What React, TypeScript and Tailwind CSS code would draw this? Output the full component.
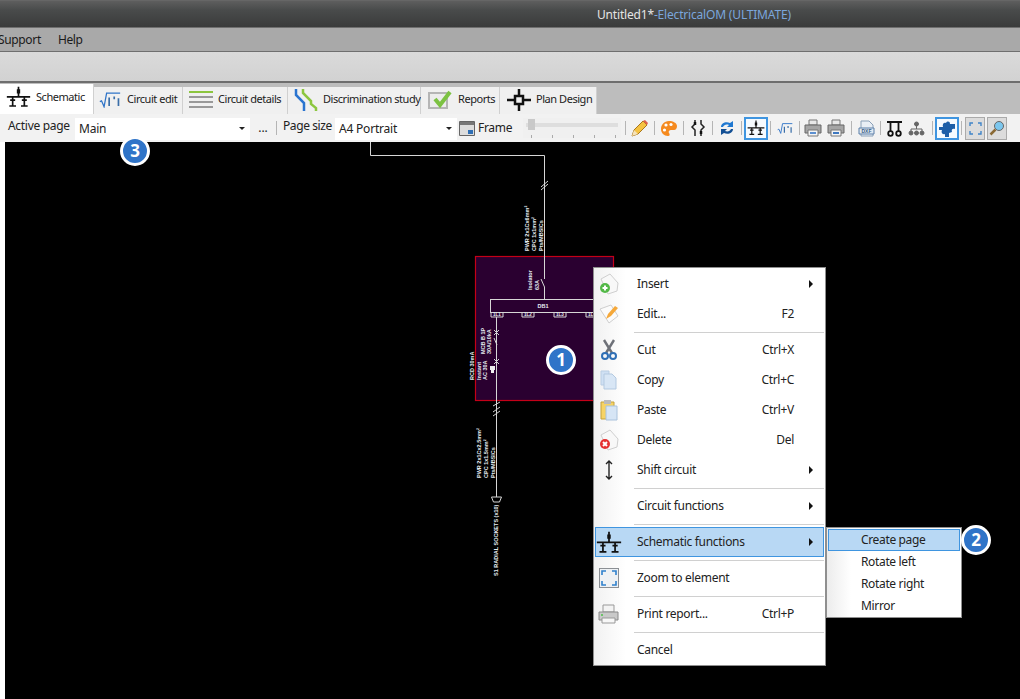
import type { ReactNode } from "react";

const SANS = "font-['Open_Sans','Noto_Sans',sans-serif]";

function SchematicIcon({ size = 30 }: { size?: number }) {
  return (
    <svg width={size} height={(size * 26) / 30} viewBox="0 0 30 26" stroke="#111" fill="#111">
      <path d="M15 1v12M1 13h28M8 13v11M22 13v11" strokeWidth="2" fill="none" />
      <path d="M13 4h4v5h-4zM5 16h6v2H5zM19 16h6v2h-6zM4 23h8v2H4zM18 23h8v2h-8z" stroke="none" />
    </svg>
  );
}

function SqrtIcon({ w = 26, h = 18 }: { w?: number; h?: number }) {
  return (
    <svg width={w} height={h} viewBox="0 0 26 18" fill="none" stroke="#2f74c8">
      <path d="M1 11l2-1 3 7 3-16h16" strokeWidth="1.5" />
      <path d="M12 6v10M18 5v3M23 7v9" strokeWidth="2" stroke="#3a6ea8" />
    </svg>
  );
}

function PrinterIcon({ accent = "#5b8fd0" }: { accent?: string }) {
  return (
    <svg width="18" height="18" viewBox="0 0 18 18">
      <path d="M5 1h8v5H5z" fill="#e8e8e8" stroke="#777" />
      <path d="M1 6h16v8H1z" fill="#a5a5a5" stroke="#666" />
      <path d="M4 11h10v6H4z" fill="#f4f4f4" stroke="#777" />
      <path d="M6 13h6v2H6z" fill={accent} />
    </svg>
  );
}

function Sep() {
  return <div className="w-px h-[14px] bg-[#b5b5b5] shrink-0" />;
}

function Tab({ w, active, icon, label }: { w: string; active?: boolean; icon: ReactNode; label: string }) {
  return (
    <div
      className={`${w} flex items-center shrink-0 border-r border-[#d0d0d0] ${active ? "bg-white pb-1" : "bg-[#f0f0f0] mt-[3px] pb-[2px]"}`}
    >
      {icon}
      <span className="font-['Liberation_Sans',sans-serif] text-[11px] tracking-[-0.45px] text-[#222] whitespace-nowrap">{label}</span>
    </div>
  );
}

function Combo({ w, label }: { w: string; label: string }) {
  return (
    <div className={`${w} h-[22px] mt-[1px] bg-white flex items-center shrink-0 pl-[4px] pr-[5px] justify-between`}>
      <span className="text-[12px] tracking-[-0.2px] text-[#222] mt-[1px]">{label}</span>
      <span className="w-0 h-0 border-x-[3px] border-x-transparent border-t-[3px] border-t-[#222]" />
    </div>
  );
}

function ToolSlot({ w = "w-[28px]", boxed, framed, children }: { w?: string; boxed?: boolean; framed?: boolean; children: ReactNode }) {
  return (
    <div
      className={`${w} h-[23px] shrink-0 flex items-center justify-center ${boxed ? "border-2 border-[#3f95e0] bg-[#f6fbff]" : ""} ${framed ? "border border-[#aaa] bg-[#dcdcdc]" : ""}`}
    >
      {children}
    </div>
  );
}

function Toolbar() {
  return (
    <div className={`${SANS} h-[28px] bg-[#f2f2f2] flex items-center pl-[8px] shrink-0`}>
      <span className="w-[67px] text-[12px] tracking-[-0.3px] text-[#222] shrink-0 whitespace-nowrap -mt-1">Active page</span>
      <Combo w="w-[175px]" label="Main" />
      <span className="w-[26px] text-center text-[12px] text-[#222] shrink-0">...</span>
      <Sep />
      <span className="w-[58px] pl-[6px] text-[12px] tracking-[-0.4px] text-[#222] shrink-0 whitespace-nowrap -mt-1">Page size</span>
      <Combo w="w-[122px]" label="A4 Portrait" />
      <svg width="16" height="15" viewBox="0 0 16 15" className="ml-[2px] shrink-0">
        <path d="M.5.5h15v14H.5z" fill="#ddd" stroke="#666" />
        <path d="M1 1h14v3H1z" fill="#777" />
        <path d="M9 9h5v4H9z" fill="#2f6fb5" />
      </svg>
      <span className="w-[48px] pl-[3px] text-[12px] tracking-[-0.3px] text-[#222] shrink-0">Frame</span>
      <div className="w-[98px] h-[20px] shrink-0 relative bg-[#f0f0f0]">
        <div className="absolute left-[3px] right-[3px] top-[5px] h-[4px] bg-[#dedede]" />
        <div className="absolute left-[5px] top-[1px] w-[7px] h-[11px] bg-[#c9c9c9]" />
        <div className="absolute left-[8px] right-[5px] bottom-0 h-[3px] flex justify-between">
          <i className="w-px h-full bg-[#aaa]" />
          <i className="w-px h-full bg-[#aaa]" />
          <i className="w-px h-full bg-[#aaa]" />
          <i className="w-px h-full bg-[#aaa]" />
          <i className="w-px h-full bg-[#aaa]" />
        </div>
      </div>
      <div className="ml-[4px]"><Sep /></div>
      <ToolSlot>
        <svg width="18" height="18" viewBox="0 0 18 18">
          <path d="M1 17l2-6L12 2l4 4-9 9z" fill="#f5c242" stroke="#a8761c" />
          <path d="M12 2l2-1 3 3-1 2z" fill="#e0604c" />
          <path d="M1 17l2-6 4 4z" fill="#f5e2b8" />
        </svg>
      </ToolSlot>
      <Sep />
      <ToolSlot>
        <svg width="18" height="17" viewBox="0 0 18 17">
          <path d="M9 1C4 1 1 5 1 9s3 7 7 7c2 0 2-2 1-3s0-3 2-3h3c2 0 3-2 3-4 0-3-4-5-8-5z" fill="#f58a1f" />
          <circle cx="6" cy="5" r="1.6" fill="#fff" />
          <circle cx="11" cy="4.5" r="1.6" fill="#fff" />
          <circle cx="4.5" cy="10" r="1.6" fill="#fff" />
        </svg>
      </ToolSlot>
      <Sep />
      <ToolSlot>
        <svg width="16" height="18" viewBox="0 0 16 18" fill="none" stroke="#222" strokeWidth="1.5">
          <path d="M5 1v4L2 8l3 3v6M11 1v4l3 3-3 3v6" />
          <path d="M5 3v3M11 12v3" stroke="#111" strokeWidth="2.5" />
        </svg>
      </ToolSlot>
      <Sep />
      <ToolSlot>
        <svg width="16" height="16" viewBox="0 0 16 16" fill="#1f78d1">
          <path d="M2 7c0-4 5-6 9-4l3-2v6H8l2-2C7 4 5 5 4 7z" />
          <path d="M14 9c0 4-5 6-9 4l-3 2V9h6l-2 2c3 1 5 0 6-2z" fill="#124f94" />
        </svg>
      </ToolSlot>
      <Sep />
      <div className="w-[28px] flex justify-center shrink-0">
        <ToolSlot w="w-[24px]" boxed><SchematicIcon size={18} /></ToolSlot>
      </div>
      <Sep />
      <ToolSlot><SqrtIcon w={16} h={11} /></ToolSlot>
      <Sep />
      <ToolSlot w="w-[26px]"><PrinterIcon /></ToolSlot>
      <ToolSlot w="w-[20px]"><PrinterIcon accent="#3f78c0" /></ToolSlot>
      <div className="ml-[5px]"><Sep /></div>
      <ToolSlot>
        <svg width="17" height="17" viewBox="0 0 17 17">
          <path d="M3 1h8l4 4v11H3z" fill="#e8eef5" stroke="#8aa0b8" />
          <path d="M1 8h15v6H1z" fill="#dfe8f2" stroke="#5a7fa8" />
          <text x="8.5" y="13" textAnchor="middle" fontFamily="'Liberation Sans',sans-serif" fontSize="5" fontWeight="700" fill="#3d5f85">DXF</text>
        </svg>
      </ToolSlot>
      <Sep />
      <ToolSlot w="w-[26px]">
        <svg width="17" height="17" viewBox="0 0 17 17" fill="none" stroke="#111" strokeWidth="1.8">
          <path d="M1 2h15M4.500 2v9M12.500 2v9" />
          <circle cx="4.500" cy="13.500" r="2.300" />
          <circle cx="12.500" cy="13.500" r="2.300" />
        </svg>
      </ToolSlot>
      <ToolSlot w="w-[18px]">
        <svg width="17" height="15" viewBox="0 0 17 15" fill="#666" stroke="#666">
          <path d="M8.500 4v4M3 12V8h11v4" fill="none" />
          <circle cx="8.500" cy="3" r="2" />
          <circle cx="3" cy="12" r="2" />
          <circle cx="8.500" cy="12" r="2" />
          <circle cx="14" cy="12" r="2" />
        </svg>
      </ToolSlot>
      <div className="ml-[7px]"><Sep /></div>
      <div className="w-[28px] flex justify-center shrink-0">
        <ToolSlot w="w-[24px]" boxed>
          <svg width="18" height="17" viewBox="0 0 18 17" fill="#1d5fa8">
            <path d="M1 7h4c-1-3 1-5 3-4 1-2 4-2 4 1h5v5c-2-1-4 0-3 3l-3 1v4H7v-3c-3 1-4-2-3-4H1z" />
          </svg>
        </ToolSlot>
      </div>
      <Sep />
      <div className="ml-[3px] flex gap-[2px]">
        <ToolSlot w="w-[20px]" framed>
          <svg width="13" height="13" viewBox="0 0 13 13" fill="none" stroke="#3f84c8" strokeWidth="1.4">
            <path d="M1 4V1h3M9 1h3v3M12 9v3H9M4 12H1V9" />
          </svg>
        </ToolSlot>
        <ToolSlot w="w-[20px]" framed>
          <svg width="16" height="16" viewBox="0 0 16 16">
            <circle cx="10" cy="6" r="4.500" fill="#7cc7ee" stroke="#666" />
            <path d="M6.500 9.500L1.500 14.500" stroke="#8a6a35" strokeWidth="2.500" />
          </svg>
        </ToolSlot>
      </div>
    </div>
  );
}

function Vtext({ x, y, children }: { x: number; y: number; children: string }) {
  return (
    <text
      x={x}
      y={y}
      transform={`rotate(-90 ${x} ${y})`}
      fontFamily="'Liberation Sans',sans-serif"
      fontSize="5.5"
      fontWeight="700"
      fill="#e6edf2"
    >
      {children}
    </text>
  );
}

function Diagram() {
  const line = "#d6d6d6";
  return (
    <svg width="1015" height="557" viewBox="5 142 1015 557" className="block">
      <rect x="475.500" y="256.500" width="138" height="144" fill="#2a0030" stroke="#c40018" strokeWidth="1.200" />
      <g fill="none" stroke={line} strokeWidth="1">
        <path d="M370.500 142v13.500h174V279M541 279l3.500 8V299" />
        <path d="M541 190l7-6M541 187l7-6" />
        <rect x="490.500" y="299.500" width="120" height="13" />
        <path d="M491 312v5h12v-5M522 312v5h12v-5M554 312v5h12v-5M586 312v5h12v-5" />
        <path d="M496.500 317v180" />
        <path d="M494 335l5-5M494 330l5 5M494 364l5-5M494 359l5 5M494 338l3 7" />
        <path d="M493 412l7-5M493 416l7-5M493 406l7-4" />
        <path d="M491.500 497h10l-2 5h-6z" />
      </g>
      <path d="M490 366h5v4h-1v3h-3v-3h-1z" fill="#eee" />
      <text x="543" y="307.500" textAnchor="middle" fontFamily="'Liberation Sans',sans-serif" fontSize="5.5" fontWeight="700" fill="#e6edf2">DB1</text>
      <g fontFamily="'Liberation Sans',sans-serif" fontSize="4.500" fontWeight="700" fill="#e6edf2" textAnchor="middle">
        <text x="497" y="316">1L1</text>
        <text x="528" y="316">1L2</text>
        <text x="560" y="316">1L3</text>
        <text x="592" y="316">1L1</text>
      </g>
      <Vtext x={529} y={251}>PWR 2x1Cx6mm²</Vtext>
      <Vtext x={536} y={251}>CPC 1x1mm²</Vtext>
      <Vtext x={543} y={251}>Pts/MBSICs</Vtext>
      <Vtext x={532} y={290}>Isolator</Vtext>
      <Vtext x={539} y={290}>63A</Vtext>
      <Vtext x={485} y={354}>MCB B 1P</Vtext>
      <Vtext x={491} y={354}>30A/10kA</Vtext>
      <Vtext x={474} y={380}>RCD 30mA</Vtext>
      <Vtext x={481} y={380}>Instant</Vtext>
      <Vtext x={487} y={380}>AC 30A</Vtext>
      <Vtext x={481} y={478}>PWR 2x1Cx2.5mm²</Vtext>
      <Vtext x={488} y={478}>CPC 1x1.5mm²</Vtext>
      <Vtext x={495} y={478}>Pts/MBSICs</Vtext>
      <Vtext x={498} y={576}>S1 RADIAL SOCKETS (x10)</Vtext>
    </svg>
  );
}

function DocIcon({ badge, mark }: { badge: string; mark: "plus" | "x" }) {
  return (
    <svg width="22" height="22" viewBox="0 0 22 22">
      <path d="M3 6l9-5 8 9-1 8-9 3z" fill="#f8f8f8" stroke="#cfcfcf" />
      <circle cx="7" cy="15" r="5" fill={badge} />
      {mark === "plus" ? (
        <path d="M4.500 15h5M7 12.500v5" stroke="#fff" strokeWidth="2" />
      ) : (
        <path d="M5 13l4 4M9 13l-4 4" stroke="#fff" strokeWidth="2" />
      )}
    </svg>
  );
}

const menuIcons: Record<string, ReactNode> = {
  Insert: <DocIcon badge="#54b948" mark="plus" />,
  "Edit...": (
    <svg width="22" height="22" viewBox="0 0 22 22">
      <path d="M2 6l11-4 7 11-9 7z" fill="#fbfbfb" stroke="#cfcfcf" />
      <path d="M8 16l2-5 7-8 3 2-7 8z" fill="#f5a83a" />
    </svg>
  ),
  Cut: (
    <svg width="18" height="22" viewBox="0 0 18 22" fill="none">
      <path d="M4 1l8 13M14 1L6 14" stroke="#6e7178" strokeWidth="2.400" />
      <circle cx="5" cy="17" r="3" stroke="#2f6fb5" strokeWidth="2" />
      <circle cx="13" cy="17" r="3" stroke="#2f6fb5" strokeWidth="2" />
    </svg>
  ),
  Copy: (
    <svg width="18" height="20" viewBox="0 0 18 20">
      <path d="M1 1h8v14H1z" fill="#cfe0f3" stroke="#b9cde3" />
      <path d="M4 4h8l4 4v11H4z" fill="#d8e6f5" stroke="#b3c9e0" />
    </svg>
  ),
  Paste: (
    <svg width="18" height="22" viewBox="0 0 18 22">
      <path d="M1 3h13v17H1z" fill="#f6d365" stroke="#c4a23c" />
      <path d="M4 1h7v4H4z" fill="#bbb" />
      <path d="M6 7h11v14H6z" fill="#d6e5f5" stroke="#aac2dc" />
    </svg>
  ),
  Delete: <DocIcon badge="#e53131" mark="x" />,
  "Shift circuit": (
    <svg width="12" height="22" viewBox="0 0 12 22" fill="none" stroke="#222" strokeWidth="1.400">
      <path d="M6 2v18M3 5l3-3 3 3M3 17l3 3 3-3" />
    </svg>
  ),
  "Schematic functions": <SchematicIcon size={26} />,
  "Zoom to element": (
    <svg width="20" height="20" viewBox="0 0 20 20" fill="none">
      <rect x=".5" y=".5" width="19" height="19" fill="#eef1f4" stroke="#8b8f94" />
      <path d="M3 7V3h4M13 3h4v4M17 13v4h-4M7 17H3v-4" stroke="#2f80cc" strokeWidth="1.600" />
    </svg>
  ),
  "Print report...": (
    <svg width="21" height="21" viewBox="0 0 21 21">
      <path d="M5 1h11v7H5z" fill="#f3f3f3" stroke="#999" />
      <path d="M1 8h19v8H1z" fill="#c9c9c9" stroke="#8a8a8a" />
      <path d="M4 14h13v5H4z" fill="#f7f7f7" stroke="#999" />
      <path d="M3 10h2v2H3z" fill="#6cc36a" />
    </svg>
  ),
};

type MenuEntry = { label?: string; shortcut?: string; arrow?: boolean; highlight?: boolean };

const menuEntries: MenuEntry[] = [
  { label: "Insert", arrow: true },
  { label: "Edit...", shortcut: "F2" },
  {},
  { label: "Cut", shortcut: "Ctrl+X" },
  { label: "Copy", shortcut: "Ctrl+C" },
  { label: "Paste", shortcut: "Ctrl+V" },
  { label: "Delete", shortcut: "Del" },
  { label: "Shift circuit", arrow: true },
  {},
  { label: "Circuit functions", arrow: true },
  {},
  { label: "Schematic functions", arrow: true, highlight: true },
  {},
  { label: "Zoom to element" },
  {},
  { label: "Print report...", shortcut: "Ctrl+P" },
  {},
  { label: "Cancel" },
];

function ContextMenu() {
  return (
    <div className={`${SANS} absolute left-[593px] top-[267px] w-[233px] h-[399px] bg-white border border-[#8f8f8f] bg-[linear-gradient(to_right,#f1f1f1_0,#ffffff_32px)] text-[12px] tracking-[-0.3px] text-[#222] p-px`}>
      {menuEntries.map((entry, i) =>
        entry.label ? (
          <div
            key={i}
            className={`h-[30px] flex items-center ${entry.highlight ? "bg-[#b8d8f4] border border-[#3f95e0]" : ""}`}
          >
            <div className={`${entry.highlight ? "w-[26px]" : "w-[27px]"} shrink-0 flex justify-center`}>{menuIcons[entry.label]}</div>
            <span className="ml-[15px] w-[105px] whitespace-nowrap">{entry.label}</span>
            <span className="w-[52px] text-right whitespace-nowrap">{entry.shortcut}</span>
            {entry.arrow && (
              <span className="ml-[15px] w-0 h-0 border-y-[4px] border-y-transparent border-l-[4px] border-l-[#111]" />
            )}
          </div>
        ) : (
          <div key={i} className="h-[6px] flex items-center pl-[39px]">
            <div className="w-full h-px bg-[#d0d0d0]" />
          </div>
        ),
      )}
    </div>
  );
}

function SubMenu() {
  return (
    <div className={`${SANS} absolute left-[826px] top-[527px] w-[136px] h-[91px] bg-[linear-gradient(to_right,#ececec_0,#ffffff_24px)] border border-[#8f8f8f] p-px text-[12px] tracking-[-0.35px] text-[#222]`}>
      <div className="h-[22px] bg-[#b8d8f4] border border-[#3f95e0] flex items-center pl-[32px]">Create page</div>
      <div className="h-[22px] flex items-center pl-[33px]">Rotate left</div>
      <div className="h-[22px] flex items-center pl-[33px]">Rotate right</div>
      <div className="h-[22px] flex items-center pl-[33px]">Mirror</div>
    </div>
  );
}

function Badge({ pos, n }: { pos: string; n: number }) {
  return (
    <div
      className={`absolute ${pos} w-[30px] h-[30px] rounded-full bg-[#2f74c8] border-[3px] border-white flex items-center justify-center font-['Liberation_Sans',sans-serif] font-bold text-[17px] text-white`}
    >
      {n}
    </div>
  );
}

export default function App() {
  return (
    <div className="relative w-[1020px] h-[699px] overflow-hidden flex flex-col bg-white">
      <div className={`${SANS} h-[27px] shrink-0 bg-[linear-gradient(to_bottom,#5e5e5e_0,#494b4b_35%,#3a3b3b_100%)] border-t border-[#666] pl-[597px] pt-px flex items-center text-[12px] tracking-[-0.18px] whitespace-nowrap`}>
        <span className="text-[#e4e4e4]">Untitled1*</span>
        <span className="text-[#7ba6dc]">-ElectricalOM (ULTIMATE)</span>
      </div>
      <div className={`${SANS} h-[25px] shrink-0 bg-[#a9a9a9] border-y border-[#6f6f6f] flex items-center gap-[19px] text-[12px] tracking-[-0.35px] text-[#1a1a1a] -indent-[2px]`}>
        <span>Support</span>
        <span>Help</span>
      </div>
      <div className="h-[29px] shrink-0 bg-[linear-gradient(to_bottom,#dadada,#d2d2d2)]" />
      <div className="h-[2px] shrink-0 bg-[#6e6e6e]" />
      <div className="h-[31px] shrink-0 bg-[#bdbdbd] pt-[1px] flex items-stretch">
        <Tab
          w="w-[94px]"
          active
          icon={<span className="pl-[6px] pr-[5px]"><SchematicIcon size={25} /></span>}
          label="Schematic"
        />
        <Tab w="w-[89px]" icon={<span className="pl-[5px] pr-[6px]"><SqrtIcon w={22} h={16} /></span>} label="Circuit edit" />
        <Tab
          w="w-[105px]"
          icon={
            <span className="pl-[6px] pr-[5px]">
              <svg width="24" height="18" viewBox="0 0 24 18" className="block">
                <path d="M0 1h24" stroke="#8cc63f" strokeWidth="2" />
                <path d="M0 6h24M0 11h24M0 16h24" stroke="#999" strokeWidth="2" />
              </svg>
            </span>
          }
          label="Circuit details"
        />
        <Tab
          w="w-[133px]"
          icon={
            <span className="pl-[6px] pr-[5px]">
              <svg width="24" height="24" viewBox="0 0 24 24" fill="none" strokeWidth="2.500" className="block">
                <path d="M2 1v6l8 8v8" stroke="#2a74d0" />
                <path d="M9 1v4l8 8v3l5 4v3" stroke="#8cc63f" />
              </svg>
            </span>
          }
          label="Discrimination study"
        />
        <Tab
          w="w-[79px]"
          icon={
            <span className="pl-[7px] pr-[6px]">
              <svg width="24" height="20" viewBox="0 0 24 20" fill="none" className="block">
                <rect x="1" y="3" width="18" height="15" fill="#ececec" stroke="#b5b5b5" strokeWidth="2" />
                <path d="M7 9l5 6L22 2" stroke="#7cc242" strokeWidth="4" />
              </svg>
            </span>
          }
          label="Reports"
        />
        <Tab
          w="w-[97px]"
          icon={
            <span className="pl-[7px] pr-[5px]">
              <svg width="24" height="22" viewBox="0 0 24 22" fill="none" stroke="#111" strokeWidth="2.500" className="block">
                <path d="M12 0v7M12 15v7M0 11h8M16 11h8" />
                <rect x="8" y="7" width="8" height="8" />
              </svg>
            </span>
          }
          label="Plan Design"
        />
      </div>
      <Toolbar />
      <div className="flex-1 min-h-0 bg-white pl-[5px]">
        <div className="h-full bg-black overflow-hidden">
          <Diagram />
        </div>
      </div>
      <ContextMenu />
      <SubMenu />
      <Badge pos="left-[546px] top-[345px]" n={1} />
      <Badge pos="left-[961px] top-[525px]" n={2} />
      <Badge pos="left-[120px] top-[136px]" n={3} />
    </div>
  );
}
